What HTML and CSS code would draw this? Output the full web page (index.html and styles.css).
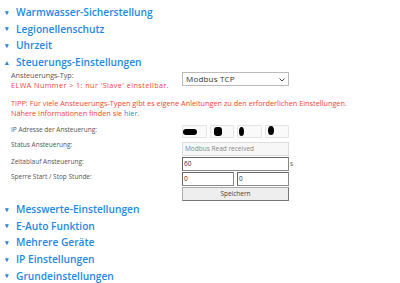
FILE: index.html
```html
<!DOCTYPE html>
<html lang="de">
<head>
  <meta charset="UTF-8" />
  <title>Einstellungen</title>
  <link rel="stylesheet" href="styles.css">
</head>
<body>
  <div class="settings">
    <div class="section-title"><span class="arrow">&#9662;</span>Warmwasser-Sicherstellung</div>
    <div class="section-title"><span class="arrow">&#9662;</span>Legionellenschutz</div>
    <div class="section-title"><span class="arrow">&#9662;</span>Uhrzeit</div>
    <div class="section-title"><span class="arrow">&#9652;</span>Steuerungs-Einstellungen</div>

    <div class="section-body">
      <div class="row row-type">
        <div class="label">
          Ansteuerungs-Typ:<br>
          <span class="warn">ELWA Nummer &gt; 1: nur 'Slave' einstellbar.</span>
        </div>
        <div class="select">Modbus TCP
          <svg class="chevron" width="6" height="4" viewBox="0 0 6 4"><path d="M0.5 0.5 L3 3 L5.5 0.5" fill="none" stroke="#444" stroke-width="1"/></svg>
        </div>
      </div>

      <p class="tip">TIPP: Für viele Ansteuerungs-Typen gibt es eigene Anleitungen zu den erforderlichen Einstellungen.<br>
      Nähere Informationen finden sie <a href="#">hier</a>.</p>

      <div class="row row-ip">
        <div class="label">IP Adresse der Ansteuerung:</div>
        <div class="ip">
          <div class="ip-box"><span class="blot blot-1"></span></div>
          <div class="ip-box"><span class="blot blot-2"></span></div>
          <div class="ip-box"><span class="blot blot-3"></span></div>
          <div class="ip-box"><span class="blot blot-4"></span></div>
        </div>
      </div>
      <div class="row row-status">
        <div class="label">Status Ansteuerung:</div>
        <div class="field disabled">Modbus Read received</div>
      </div>
      <div class="row">
        <div class="label">Zeitablauf Ansteuerung:</div>
        <div class="field-unit"><div class="field">60</div><span class="unit">s</span></div>
      </div>
      <div class="row">
        <div class="label">Sperre Start / Stop Stunde:</div>
        <div class="pair">
          <div class="field">0</div>
          <div class="field">0</div>
        </div>
      </div>
      <div class="row">
        <div class="label"></div>
        <div class="button">Speichern</div>
      </div>
    </div>

    <div class="section-title"><span class="arrow">&#9662;</span>Messwerte-Einstellungen</div>
    <div class="section-title"><span class="arrow">&#9662;</span>E-Auto Funktion</div>
    <div class="section-title"><span class="arrow">&#9662;</span>Mehrere Geräte</div>
    <div class="section-title"><span class="arrow">&#9662;</span>IP Einstellungen</div>
    <div class="section-title"><span class="arrow">&#9662;</span>Grundeinstellungen</div>
  </div>
</body>
</html>
```

FILE: styles.css
```css
body {
  margin: 0;
  font-family: 'Open Sans', 'Noto Sans', sans-serif;
  background: #fff;
  color: #555;
}

.settings {
  padding-top: 4px;
}

.section-title {
  display: flex;
  align-items: center;
  height: 16.6px;
  padding-left: 5px;
  font-size: 10.2px;
  font-weight: 600;
  color: #1e88e5;
}

.arrow {
  width: 11px;
  font-size: 7px;
}

.section-body {
  padding: 0 0 0 11px;
}

.row {
  display: flex;
  align-items: flex-start;
  margin-top: 1px;
}

.label {
  width: 171px;
  font-size: 6.5px;
  line-height: 10px;
  color: #555;
}

.row-type {
  margin-top: 0;
}

.row-type .label {
  font-size: 7.2px;
}

.warn {
  color: #f44336;
  letter-spacing: 0.45px;
}

.select {
  position: relative;
  box-sizing: border-box;
  width: 107px;
  height: 14px;
  margin-top: 1.6px;
  padding-left: 3px;
  border: 1px solid #bbb;
  font-size: 8px;
  letter-spacing: 0.2px;
  line-height: 12px;
  color: #333;
}

.chevron {
  position: absolute;
  right: 3px;
  top: 5px;
}

.tip {
  margin: 7.6px 0 0;
  font-size: 7.3px;
  line-height: 10px;
  color: #f44336;
}

.tip a {
  color: #1e88e5;
  text-decoration: none;
}

.row-ip {
  margin-top: 7px;
}

.row-status {
  margin-top: 4px;
}

.row-status .label {
  margin-top: -2px;
}

.ip {
  display: flex;
  gap: 3px;
  width: 107px;
}

.ip-box {
  position: relative;
  flex: 1;
  height: 11px;
  border: 1px solid #e4e4e4;
  border-radius: 1px;
  background: #fafafa;
}

.blot {
  position: absolute;
  background: #000;
  border-radius: 50%;
}

.blot-1 { left: 0; top: 3px; width: 14px; height: 6px; border-radius: 3px; }
.blot-2 { left: 3px; top: 1px; width: 8px; height: 9px; border-radius: 3px; }
.blot-3 { left: 1px; top: 1px; width: 5px; height: 9px; }
.blot-4 { left: 2px; top: 0; width: 6px; height: 9px; }

.field {
  box-sizing: border-box;
  width: 107px;
  height: 14px;
  border: 1px solid #888;
  border-top-color: #666;
  border-left-color: #666;
  background: #fff;
  font-size: 6.5px;
  line-height: 12px;
  padding-left: 1px;
  color: #333;
}

.field.disabled {
  background: #f7f7f7;
  border-color: #ddd;
  color: #888;
  padding-left: 2px;
}

.field-unit {
  display: flex;
  align-items: center;
}

.unit {
  font-size: 6.5px;
  margin-left: 1px;
}

.pair {
  display: flex;
  gap: 3px;
  width: 107px;
}

.pair .field {
  flex: 1;
  width: auto;
}

.button {
  box-sizing: border-box;
  width: 107px;
  height: 14px;
  border: 1px solid #777;
  border-top-color: #aaa;
  border-left-color: #aaa;
  background: #eee;
  font-size: 6.5px;
  line-height: 12px;
  text-align: center;
  color: #444;
}
```
